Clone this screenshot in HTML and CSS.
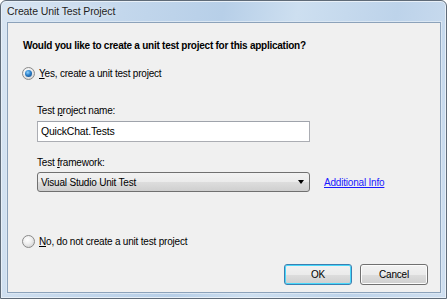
FILE: index.html
```html
<!DOCTYPE html>
<html>
<head>
<meta charset="utf-8">
<link rel="stylesheet" href="styles.css">
</head>
<body>
<div class="window">
  <div class="titlebar">Create Unit Test Project</div>
  <div class="client">
    <div class="heading">Would you like to create a unit test project for this application?</div>
    <div class="radio-row yes">
      <span class="radio checked"></span>
      <span class="label"><u>Y</u>es, create a unit test project</span>
    </div>
    <div class="indent">
      <div class="field-label">Test <u>p</u>roject name:</div>
      <div class="textbox">QuickChat.Tests</div>
      <div class="field-label fw">Test <u>f</u>ramework:</div>
      <div class="combo-row">
        <div class="combo">
          <span>Visual Studio Unit Test</span>
          <span class="arrow"></span>
        </div>
        <a class="link">Additional Info</a>
      </div>
    </div>
    <div class="radio-row no">
      <span class="radio"></span>
      <span class="label"><u>N</u>o, do not create a unit test project</span>
    </div>
    <div class="buttons">
      <div class="btn default">OK</div>
      <div class="btn">Cancel</div>
    </div>
  </div>
</div>
</body>
</html>
```
FILE: styles.css
```css
html, body {
  margin: 0;
  padding: 0;
  width: 447px;
  height: 299px;
  overflow: hidden;
  background: #ffffff;
}
body {
  font-family: "Liberation Sans", Arial, sans-serif;
  font-size: 10px;
  letter-spacing: -0.2px;
  line-height: 15px;
  color: #000;
}
.window {
  box-sizing: border-box;
  width: 447px;
  height: 299px;
  border: 1px solid #5f6b78;
  border-radius: 6px 6px 0 0;
  background: linear-gradient(100deg, #d9e6f3 0%, #c3d7ec 25%, #b7cfe8 45%, #cddff0 60%, #bdd3ea 80%, #cfdff0 100%);
  box-shadow: inset 0 0 0 1px #e8f0f8;
  display: flex;
  flex-direction: column;
  padding: 0 5px 5px 6px;
}
.titlebar {
  height: 21px;
  line-height: 21px;
  font-size: 10.5px;
  letter-spacing: -0.1px;
  color: #1e1e1e;
  text-shadow: 0 0 6px rgba(255,255,255,0.9);
  flex: none;
}
.client {
  flex: 1;
  background: #f0f0f0;
  border: 1px solid #8ca2ba;
  box-shadow: 0 0 0 1px #dbe7f3;
  padding: 15px 12px 0 15px;
  display: flex;
  flex-direction: column;
}
.heading {
  font-weight: bold;
  height: 15px;
  letter-spacing: -0.25px;
}
.radio-row {
  display: flex;
  align-items: center;
  height: 15px;
  gap: 2px;
}
.radio-row.yes { margin-top: 13px; }
.radio-row.no { margin-top: 42px; }
.radio {
  box-sizing: border-box;
  width: 13px;
  height: 13px;
  border-radius: 50%;
  border: 1px solid #8a8a8a;
  background: radial-gradient(circle at 40% 35%, #ffffff 0%, #f0f0f0 40%, #c8c8c8 100%);
  margin-left: -1px;
  position: relative;
  flex: none;
}
.radio.checked::after {
  content: "";
  position: absolute;
  left: 2px;
  top: 2px;
  width: 7px;
  height: 7px;
  border-radius: 50%;
  background: radial-gradient(circle at 40% 35%, #8fd3ff 0%, #2b7fc9 45%, #0c3f7a 100%);
}
.label { margin-left: 2px; }
.indent {
  margin-left: 14px;
  display: flex;
  flex-direction: column;
}
.field-label {
  margin-top: 22px;
  height: 15px;
}
.field-label.fw { margin-top: 13px; }
.textbox {
  box-sizing: border-box;
  margin-top: 3px;
  width: 273px;
  height: 21px;
  background: #fff;
  border: 1px solid #abadb3;
  border-top-color: #9fa3ab;
  line-height: 19px;
  padding-left: 3px;
  font-size: 10.5px;
}
.combo-row {
  margin-top: 2px;
  height: 20px;
  display: flex;
  align-items: center;
}
.combo {
  box-sizing: border-box;
  width: 273px;
  height: 20px;
  border: 1px solid #707070;
  border-radius: 3px;
  background: linear-gradient(#f2f2f2 0%, #ebebeb 50%, #dddddd 51%, #cfcfcf 100%);
  display: flex;
  align-items: center;
  justify-content: space-between;
  padding: 0 3px 0 3px;
}
.arrow {
  width: 0;
  height: 0;
  border-left: 3.5px solid transparent;
  border-right: 3.5px solid transparent;
  border-top: 4px solid #000;
  margin-right: 2px;
}
.link {
  margin-left: 14px;
  color: #1a1aff;
  text-decoration: underline;
  cursor: pointer;
}
.buttons {
  margin-top: 15px;
  display: flex;
  justify-content: flex-end;
  gap: 8px;
}
.btn {
  box-sizing: border-box;
  width: 68px;
  height: 21px;
  border: 1px solid #707070;
  border-radius: 3px;
  background: linear-gradient(#f2f2f2 0%, #ebebeb 50%, #dddddd 51%, #cfcfcf 100%);
  box-shadow: inset 0 0 0 1px #fcfcfc;
  text-align: center;
  line-height: 19px;
}
.btn.default {
  border-color: #3c7fb1;
  box-shadow: inset 0 0 0 1px #48d8fb;
}
```
